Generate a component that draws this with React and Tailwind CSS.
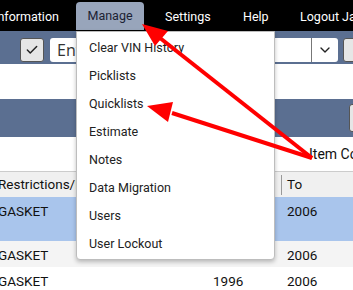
import { ChevronDown, Check } from 'lucide-react';

const menuItems = [
  'Clear VIN History',
  'Picklists',
  'Quicklists',
  'Estimate',
  'Notes',
  'Data Migration',
  'Users',
  'User Lockout',
];

const rows = [
  { name: 'GASKET', from: '', to: '2006', tall: true, bg: 'bg-[#a9c5ec]' },
  { name: 'GASKET', from: '', to: '2006', bg: 'bg-[#f4f4f4]' },
  { name: 'GASKET', from: '1996', to: '2006', bg: 'bg-white' },
];

const Arrows = () => (
  <svg className="absolute inset-0 pointer-events-none" width="353" height="290">
    {/* to Manage */}
    <line x1="312" y1="158" x2="160" y2="38" stroke="#ff0000" strokeWidth="4" />
    <polygon points="142,24 155,46 168,31" fill="#ff0000" />
    {/* to Quicklists */}
    <line x1="312" y1="158" x2="172" y2="113" stroke="#ff0000" strokeWidth="4" />
    <polygon points="147,106 173,102 168,122" fill="#ff0000" />
  </svg>
);

export default function App() {
  return (
    <div className="relative w-[353px] h-[290px] overflow-hidden bg-white font-['Roboto',sans-serif]">
      {/* top nav */}
      <div className="h-[31px] bg-black flex items-end text-[12.5px] text-white whitespace-nowrap">
        <div className="shrink-0 h-[28px] -ml-[6px] w-[61px] flex items-center">Information</div>
        <div className="shrink-0 h-[28px] ml-[21px] w-[68px] flex items-center justify-center bg-[#98a5bb] text-[#1c2233] rounded-t-[4px] mb-[1px]">
          Manage
        </div>
        <div className="shrink-0 h-[28px] ml-[21px] w-[45px] flex items-center">Settings</div>
        <div className="shrink-0 h-[28px] ml-[33px] w-[26px] flex items-center">Help</div>
        <div className="shrink-0 h-[28px] ml-[31px] flex items-center">Logout Jackson</div>
      </div>

      {/* search toolbar */}
      <div className="h-[33px] bg-[#5b6f91] flex items-start pt-[7px] pl-[20px]">
        <div className="shrink-0 w-[24px] h-[24px] bg-[#e6e6e6] border border-[#555] rounded-[3px] flex items-center justify-center">
          <Check size={14} strokeWidth={2.5} className="text-[#222]" />
        </div>
        <div className="shrink-0 ml-[6px] w-[261px] h-[24px] bg-white rounded-l-[3px] flex items-center pl-[7px] text-[16px] text-[#333] font-['Open_Sans',sans-serif] overflow-hidden">
          Enter VIN
        </div>
        <div className="shrink-0 w-[27px] h-[24px] bg-white border-l border-[#777] rounded-r-[3px] flex items-center justify-center">
          <ChevronDown size={16} strokeWidth={2} className="text-[#222]" />
        </div>
        <div className="shrink-0 ml-[5px] w-[30px] h-[24px] bg-[#e6e6e6] border border-[#555] rounded-[3px]" />
      </div>

      <div className="h-[35px] bg-white" />

      {/* second band */}
      <div className="h-[38px] bg-[#5b6f91] flex justify-end items-center">
        <div className="shrink-0 w-[20px] h-[28px] -mr-[16px] bg-[#e6e6e6] border border-[#555] rounded-[3px]" />
      </div>

      <div className="h-[34px] flex items-center pl-[309px] text-[14px] text-[#111] whitespace-nowrap">
        Item Count
      </div>

      {/* table */}
      <div className="text-[13.5px] text-[#111] whitespace-nowrap">
        <div className="h-[26px] bg-[#f0f0f0] border-t border-[#ccc] flex items-center">
          <div className="shrink-0 w-[283px] -ml-[2px]">Restrictions/Notes</div>
          <div className="h-[20px] border-l border-[#999] pl-[5px] flex items-center">To</div>
        </div>
        {rows.map((r, i) => (
          <div key={i} className={`${r.bg} flex ${r.tall ? 'h-[44px]' : 'h-[26px]'} pt-[4px]`}>
            <div className="shrink-0 w-[215px] -ml-[2px]">{r.name}</div>
            <div className="shrink-0 w-[74px]">{r.from}</div>
            <div>{r.to}</div>
          </div>
        ))}
      </div>

      {/* dropdown */}
      <div className="absolute left-[76px] top-[31px] w-[199px] bg-white border border-[#bdbdbd] rounded-b-[4px] shadow-[0_2px_4px_rgba(0,0,0,0.25)] pt-[2px] pb-[1px]">
        {menuItems.map((item) => (
          <div key={item} className="h-[28px] flex items-center pl-[12px] text-[12.5px] text-[#222]">
            {item}
          </div>
        ))}
      </div>

      <Arrows />
    </div>
  );
}
